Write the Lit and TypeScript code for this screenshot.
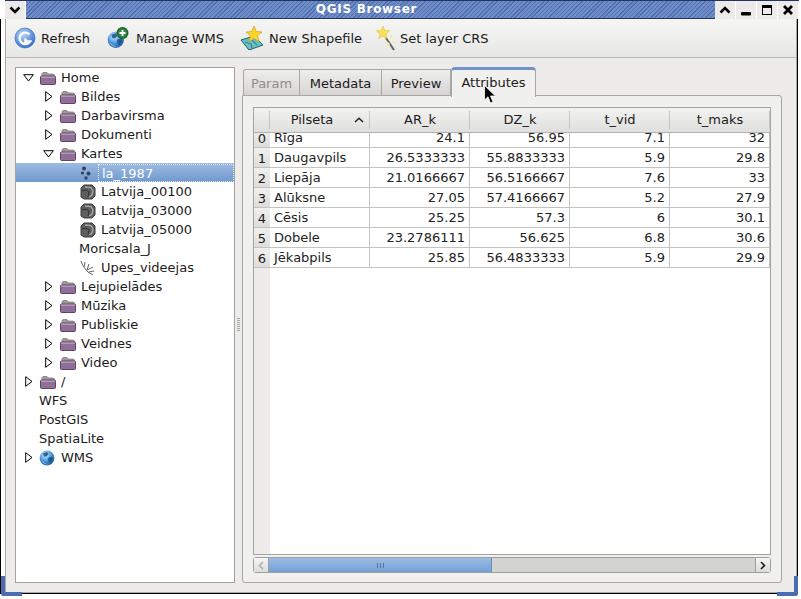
import { LitElement, html, css, svg } from 'lit';
import { customElement } from 'lit/decorators.js';

type Icon = 'folder' | 'points' | 'raster' | 'line' | 'globe' | null;
interface Node {
  label: string;
  depth: number;
  arrow?: 'open' | 'closed';
  icon?: Icon;
  selected?: boolean;
}

const TREE: Node[] = [
  { label: 'Home', depth: 0, arrow: 'open', icon: 'folder' },
  { label: 'Bildes', depth: 1, arrow: 'closed', icon: 'folder' },
  { label: 'Darbavirsma', depth: 1, arrow: 'closed', icon: 'folder' },
  { label: 'Dokumenti', depth: 1, arrow: 'closed', icon: 'folder' },
  { label: 'Kartes', depth: 1, arrow: 'open', icon: 'folder' },
  { label: 'la_1987', depth: 2, icon: 'points', selected: true },
  { label: 'Latvija_00100', depth: 2, icon: 'raster' },
  { label: 'Latvija_03000', depth: 2, icon: 'raster' },
  { label: 'Latvija_05000', depth: 2, icon: 'raster' },
  { label: 'Moricsala_J', depth: 2 },
  { label: 'Upes_videejas', depth: 2, icon: 'line' },
  { label: 'Lejupielādes', depth: 1, arrow: 'closed', icon: 'folder' },
  { label: 'Mūzika', depth: 1, arrow: 'closed', icon: 'folder' },
  { label: 'Publiskie', depth: 1, arrow: 'closed', icon: 'folder' },
  { label: 'Veidnes', depth: 1, arrow: 'closed', icon: 'folder' },
  { label: 'Video', depth: 1, arrow: 'closed', icon: 'folder' },
  { label: '/', depth: 0, arrow: 'closed', icon: 'folder' },
  { label: 'WFS', depth: 0 },
  { label: 'PostGIS', depth: 0 },
  { label: 'SpatiaLite', depth: 0 },
  { label: 'WMS', depth: 0, arrow: 'closed', icon: 'globe' },
];

const COLUMNS = ['AR_k', 'DZ_k', 't_vid', 't_maks'];
const ROWS: [string, string, string, string, string][] = [
  ['Rīga', '24.1', '56.95', '7.1', '32'],
  ['Daugavpils', '26.5333333', '55.8833333', '5.9', '29.8'],
  ['Liepāja', '21.0166667', '56.5166667', '7.6', '33'],
  ['Alūksne', '27.05', '57.4166667', '5.2', '27.9'],
  ['Cēsis', '25.25', '57.3', '6', '30.1'],
  ['Dobele', '23.2786111', '56.625', '6.8', '30.6'],
  ['Jēkabpils', '25.85', '56.4833333', '5.9', '29.9'],
];

const folder = svg`<svg width="18" height="16" viewBox="0 0 18 16">
  <path d="M3 5V3.5L4 2.5H8L9.5 4H14.5L15.5 5V7H3Z" fill="#9b9a96" stroke="#77756f" stroke-width=".7"/>
  <rect x="1.5" y="6" width="15" height="8.5" rx="1" fill="#8f6e97" stroke="#5f4468"/>
  <rect x="2" y="6.5" width="14" height="1.4" fill="#b99cbf"/>
</svg>`;

const points = svg`<svg width="16" height="16" viewBox="0 0 16 16" fill="#33445c">
  <circle cx="5" cy="3.5" r="2"/><circle cx="3.5" cy="8" r="1.6"/><circle cx="9.5" cy="8.5" r="2"/><circle cx="7" cy="13" r="1.7"/>
</svg>`;

const raster = svg`<svg width="18" height="16" viewBox="0 0 18 16">
  <path d="M2 4L5 1H13L16 4V12L13 15H5L2 13Z" fill="#5e5e5e" stroke="#3b3b3b"/>
  <path d="M6 3L12 3.5L14 7L13 11L10 13" fill="none" stroke="#a9a9a9" stroke-width="1.3"/>
  <path d="M3 7L7 6L10 8L9 13" fill="none" stroke="#2f2f2f"/>
</svg>`;

const line = svg`<svg width="18" height="16" viewBox="0 0 18 16" fill="none" stroke="#55565a" stroke-width=".9">
  <path d="M2 1C3 5 6 9 9 12L14 15M5 7L6 2M8 10L10 4M8 10L14 7M10 12L15 11"/>
</svg>`;

const globe = (s: number) => svg`<svg width=${s} height=${s} viewBox="0 0 16 16">
  <defs><radialGradient id="gl" cx=".4" cy=".3" r=".8"><stop offset="0" stop-color="#cfe9fb"/><stop offset=".55" stop-color="#3f8fd6"/><stop offset="1" stop-color="#174f94"/></radialGradient></defs>
  <circle cx="8" cy="8" r="7.4" fill="url(#gl)"/>
  <path d="M4 3.5L8 2L9.5 4L7.5 6.5L5 6.5ZM9 8L13 6.5L14.5 9L11.5 13L9.5 11.5Z" fill="#1d4f86" opacity=".85"/>
  <path d="M2 10Q6 14.5 11 14.5Q5 15 2 10Z" fill="#e6f4fd"/>
</svg>`;

const ICONS: Record<string, unknown> = { folder, points, raster, line, globe: globe(16) };

@customElement('app-root')
export class AppRoot extends LitElement {
  static styles = css`
    :host {
      display: block;
      width: 801px;
      height: 599px;
      font: 13px/19px 'DejaVu Sans', sans-serif;
      color: #1b1b1b;
      overflow: hidden;
    }
    .win {
      position: relative;
      width: 801px;
      height: 599px;
      box-sizing: border-box;
      background: #fff;
      display: flex;
      flex-direction: column;
    }
    .title {
      height: 18px;
      display: flex;
      background: #fff;
      border-top: 1px solid #23365f;
      margin: 0 2px 0 5px;
      flex: none;
    }
    .tbtn {
      width: 21px;
      flex: none;
      display: grid;
      place-items: center;
      background: #ecebe9;
      border-right: 1px solid #fff;
      box-sizing: border-box;
    }
    .stripes {
      flex: 1;
      display: flex;
      align-items: center;
      justify-content: center;
      color: #fff;
      font: bold 12px/17px 'DejaVu Sans', sans-serif;
      letter-spacing: 0.7px;
      padding-right: 8px;
      border-bottom: 1px solid #23365f;
      background: repeating-linear-gradient(135deg, #4f6fae 0 1px, #6f8dc8 1px 3px);
    }
    .frame {
      flex: 1;
      min-height: 0;
      display: flex;
      flex-direction: column;
      margin: 0 3px 5px 0;
      border-left: 1px solid #000;
      border-right: 1px solid #000;
      border-bottom: 1px solid #000;
      padding-left: 4px;
      background: #fff;
    }
    .inner {
      flex: 1;
      min-height: 0;
      display: flex;
      flex-direction: column;
      background: #edecea;
      border-left: 1px solid #aaa8a3;
      border-right: 1px solid #aaa8a3;
      border-bottom: 1px solid #aaa8a3;
    }
    .toolbar {
      height: 39px;
      flex: none;
      display: flex;
      align-items: center;
      box-sizing: border-box;
      border-bottom: 1px solid #bdbcb8;
      padding: 0 0 0 8px;
      background: linear-gradient(#f5f5f4, #e7e7e5);
    }
    .tool {
      display: flex;
      align-items: center;
    }
    .tool svg { flex: none; }
    .main {
      flex: 1;
      min-height: 0;
      display: flex;
      padding: 9px 14px 9px 9px;
    }
    .tree {
      width: 220px;
      flex: none;
      box-sizing: border-box;
      border: 1px solid #a5a39f;
      background: #fff;
    }
    .row {
      height: 19px;
      display: flex;
      align-items: center;
      white-space: nowrap;
    }
    .row.sel {
      background: linear-gradient(#9dbbe1, #7099cd);
      color: #fff;
    }
    .d0 { padding-left: 2px; }
    .d1 { padding-left: 22px; }
    .d2 { padding-left: 42px; }
    .arrow {
      width: 21px;
      height: 19px;
      flex: none;
      display: grid;
      place-items: center;
    }
    .ico {
      width: 18px;
      height: 16px;
      flex: none;
      margin-right: 4px;
      display: block;
    }
    .plain { padding-left: 0; }
    .focus {
      flex: 1;
      margin-left: -3px;
      padding-left: 3px;
      height: 18px;
      line-height: 17px;
      box-sizing: border-box;
      border: 1px dotted #dfe8f5;
    }
    .split {
      width: 7px;
      flex: none;
      display: flex;
      align-items: center;
      justify-content: center;
    }
    .grip {
      width: 3px;
      height: 14px;
      background: repeating-linear-gradient(#a9a7a2 0 1px, #edecea 1px 2px);
    }
    .tabs {
      flex: 1;
      min-width: 0;
      display: flex;
      flex-direction: column;
    }
    .tabbar {
      height: 28px;
      flex: none;
      display: flex;
      align-items: flex-end;
      padding-left: 1px;
    }
    .tab {
      box-sizing: border-box;
      height: 26px;
      padding-top: 4px;
      text-align: center;
      border: 1px solid #a9a7a3;
      border-bottom: none;
      border-left: none;
      background: linear-gradient(#eeeeec, #d6d5d3);
    }
    .tab:first-child {
      border-left: 1px solid #a9a7a3;
      border-top-left-radius: 3px;
      color: #8e8d8b;
    }
    .tab.active {
      height: 30px;
      margin-bottom: -2px;
      position: relative;
      padding-top: 3px;
      border-top: 3px solid #6f93c6;
      border-left: 1px solid #a9a7a3;
      border-radius: 4px 4px 0 0;
      background: #f0f0ee;
    }
    .pane {
      flex: 1;
      min-height: 0;
      box-sizing: border-box;
      border: 1px solid #a9a7a3;
      border-radius: 0 3px 3px 3px;
      background: #f0f0ee;
      padding: 11px 10px 9px 10px;
      display: flex;
      flex-direction: column;
    }
    .table {
      flex: 1;
      min-height: 0;
      box-sizing: border-box;
      border: 1px solid #a5a39f;
      background: linear-gradient(90deg, #edecea 16px, #fff 16px);
      overflow: hidden;
    }
    .grid {
      display: grid;
      grid-template-columns: 16px repeat(5, 100px) 6px;
      grid-auto-rows: 20px;
    }
    .grid > div {
      box-sizing: border-box;
      white-space: nowrap;
    }
    .h {
      height: 24px;
      background: linear-gradient(#f2f2f1, #dfdfdd);
      border-bottom: 1px solid #b4b3b0;
      text-align: center;
      line-height: 24px;
      position: relative;
    }
    .h::after {
      content: '';
      position: absolute;
      right: 0;
      top: 3px;
      bottom: 3px;
      width: 1px;
      background: #c6c5c2;
    }
    .h svg { position: absolute; right: 6px; top: 9px; }
    .headrow { grid-column: 1 / -1; display: grid; grid-template-columns: subgrid; height: 24px; }
    .n {
      background: linear-gradient(#f0f0ef, #dedddb);
      text-align: center;
      line-height: 21px;
      border-bottom: 1px solid #c4c3c0;
    }
    .c {
      padding: 0 4px;
      line-height: 19px;
      border-right: 1px solid #c4c3c0;
      border-bottom: 1px solid #c4c3c0;
      background: #fff;
      text-align: right;
      color: #222;
    }
    .c.name { text-align: left; }
    .c.end { padding: 0; border-right: none; }
    .sb {
      height: 16px;
      margin-top: 2px;
      flex: none;
      display: flex;
      box-sizing: border-box;
      border: 1px solid #a09e9a;
      border-radius: 3px;
      background: #d3d3d1;
    }
    .sb-btn {
      width: 14px;
      flex: none;
      display: grid;
      place-items: center;
      background: linear-gradient(#f6f6f5, #dcdcda);
    }
    .sb-btn.l { border-right: 1px solid #a09e9a; }
    .sb-btn.r { border-left: 1px solid #a09e9a; margin-left: auto; }
    .thumb {
      width: 223px;
      flex: none;
      display: grid;
      place-items: center;
      box-sizing: border-box;
      border-right: 1px solid #6d8fbf;
      background: linear-gradient(#9dbbe3, #74a0d6);
    }
    .dots {
      width: 7px;
      height: 5px;
      background: repeating-linear-gradient(90deg, #55749f 0 1px, transparent 1px 3px);
    }
    .grip-bl, .grip-br {
      position: absolute;
      bottom: 3px;
      width: 21px;
      height: 20px;
      box-sizing: border-box;
    }
    .grip-bl {
      left: 1px;
      border-left: 4px solid #4a6cb0;
      border-bottom: 4px solid #4a6cb0;
      border-bottom-left-radius: 3px;
    }
    .grip-br {
      right: 3px;
      border-right: 4px solid #4a6cb0;
      border-bottom: 4px solid #4a6cb0;
      border-bottom-right-radius: 3px;
    }
    .cursor { position: absolute; left: 484px; top: 85px; }
  `;

  private tool(icon: unknown, label: string, width: number, gap: number) {
    return html`<div class="tool" style="width:${width}px">${icon}<span style="margin-left:${gap}px">${label}</span></div>`;
  }

  private treeRow(n: Node) {
    const icon = n.icon ? ICONS[n.icon] : null;
    const arrow =
      n.arrow === 'open'
        ? html`<svg width="11" height="8" viewBox="0 0 11 8"><path d="M.7.7H10.3L5.5 7Z" fill="#fff" stroke="#000"/></svg>`
        : n.arrow === 'closed'
          ? html`<svg width="8" height="11" viewBox="0 0 8 11"><path d="M.7.7V10.3L7 5.5Z" fill="#fff" stroke="#000"/></svg>`
          : null;
    return html`<div class="row d${n.depth} ${n.selected ? 'sel' : ''}">
      <span class="arrow">${arrow}</span>
      ${icon ? html`<span class="ico">${icon}</span>` : null}
      ${n.selected ? html`<span class="focus">${n.label}</span>` : html`<span>${n.label}</span>`}
    </div>`;
  }

  render() {
    const refresh = html`<svg width="22" height="22" viewBox="0 0 22 22">
      <defs><radialGradient id="rf" cx=".4" cy=".3" r=".8"><stop offset="0" stop-color="#bcd6f7"/><stop offset=".7" stop-color="#4f86dc"/><stop offset="1" stop-color="#2a5eb6"/></radialGradient></defs>
      <circle cx="11" cy="11" r="10" fill="url(#rf)" stroke="#3f70c2" stroke-width=".7"/>
      <path d="M15.5 7.5A5.7 5.7 0 1 0 16 14.5H11.5V11.5" fill="none" stroke="#fff" stroke-width="2.4"/>
    </svg>`;
    const manage = html`<svg width="24" height="24" viewBox="0 0 24 24">
      <g transform="translate(0 5) scale(1.1)">${globe(16)}</g>
      <circle cx="15.5" cy="7" r="6" fill="#1f5f2f"/>
      <circle cx="15.5" cy="7" r="4.6" fill="#2f8a45"/>
      <path d="M15.5 4V10M12.5 7H18.5" stroke="#fff" stroke-width="1.8"/>
    </svg>`;
    const shape = html`<svg width="24" height="24" viewBox="0 0 24 24">
      <path d="M1 14L14 10L23 19L9 24Z" fill="#6ec3b4" stroke="#17606b"/>
      <path d="M5 16L11 18L12 22M12 14L17 19" fill="none" stroke="#3b78c6" stroke-width="1.2"/>
      <path d="M14 0L16.2 5.5L22 6L17.5 9.8L19 15.5L14 12.5L9 15.5L10.5 9.8L6 6L11.8 5.5Z" fill="#fbd52a" stroke="#d99a12" stroke-width=".7"/>
    </svg>`;
    const wand = html`<svg width="22" height="26" viewBox="0 0 22 26">
      <path d="M11 13L19 25" stroke="#6a6a66" stroke-width="2.2"/>
      <path d="M8 1L9.8 5.5L14.5 5.8L11 9L12.2 13.5L8 11L4 13.5L5 9L1.5 5.8L6.2 5.5Z" fill="#f7e15a" stroke="#e0bd3a" stroke-width=".6"/>
      <circle cx="16" cy="11" r="1.5" fill="#f5e9a6"/><circle cx="13" cy="19" r="1.7" fill="#f5e9a6"/><circle cx="19" cy="17" r="1.3" fill="#f5e9a6"/>
    </svg>`;
    return html`<div class="win">
      <div class="title">
        <div class="tbtn"><svg width="12" height="8" viewBox="0 0 12 8"><path d="M1.5 1.5L6 6L10.5 1.5" fill="none" stroke="#000" stroke-width="2.6"/></svg></div>
        <div class="stripes">QGIS Browser</div>
        <div class="tbtn"><svg width="12" height="8" viewBox="0 0 12 8"><path d="M1.5 6.5L6 2L10.5 6.5" fill="none" stroke="#000" stroke-width="2.6"/></svg></div>
        <div class="tbtn"><svg width="10" height="12" viewBox="0 0 10 12"><rect y="8" width="10" height="3.4" rx="1"/></svg></div>
        <div class="tbtn"><svg width="10" height="10" viewBox="0 0 10 10"><rect x=".5" y=".5" width="9" height="9" fill="none" stroke="#000"/><rect width="10" height="3"/></svg></div>
        <div class="tbtn"><svg width="10" height="10" viewBox="0 0 10 10"><path d="M1 1L9 9M9 1L1 9" stroke="#000" stroke-width="2.8"/></svg></div>
      </div>
      <div class="frame">
        <div class="inner">
          <div class="toolbar">
            ${this.tool(refresh, 'Refresh', 93, 5)}
            ${this.tool(manage, 'Manage WMS', 133, 5)}
            ${this.tool(shape, 'New Shapefile', 135, 5)}
            ${this.tool(wand, 'Set layer CRS', 140, 3)}
          </div>
          <div class="main">
            <div class="tree">${TREE.map((n) => this.treeRow(n))}</div>
            <div class="split"><div class="grip"></div></div>
            <div class="tabs">
              <div class="tabbar">
                <div class="tab" style="width:57px">Param</div>
                <div class="tab" style="width:82px">Metadata</div>
                <div class="tab" style="width:69px">Preview</div>
                <div class="tab active" style="width:85px">Attributes</div>
              </div>
              <div class="pane">
                <div class="table">
                  <div class="grid">
                    <div class="headrow">
                      <div class="h"></div>
                      <div class="h" style="padding-right:16px">Pilseta<svg width="10" height="6" viewBox="0 0 10 6"><path d="M1 5L5 1.2L9 5" fill="none" stroke="#222" stroke-width="1.5"/></svg></div>
                      ${COLUMNS.map((c) => html`<div class="h">${c}</div>`)}
                      <div class="h"></div>
                    </div>
                    ${ROWS.map(
                      (r, i) => html`<div class="n">${i}</div>
                        <div class="c name">${r[0]}</div>
                        ${r.slice(1).map((v) => html`<div class="c">${v}</div>`)}
                        <div class="c end"></div>`,
                    )}
                  </div>
                </div>
                <div class="sb">
                  <div class="sb-btn l"><svg width="6" height="9" viewBox="0 0 6 9"><path d="M5 1L1.5 4.5L5 8" fill="none" stroke="#a5a5a3" stroke-width="1.3"/></svg></div>
                  <div class="thumb"><div class="dots"></div></div>
                  <div class="sb-btn r"><svg width="6" height="9" viewBox="0 0 6 9"><path d="M1 1L4.5 4.5L1 8" fill="none" stroke="#111" stroke-width="1.5"/></svg></div>
                </div>
              </div>
            </div>
          </div>
        </div>
      </div>
      <div class="grip-bl"></div>
      <div class="grip-br"></div>
      <svg class="cursor" width="14" height="20" viewBox="0 0 14 20"><path d="M.5.5V15L4 11.8L6.5 18L9 17L6.5 11H11.5Z" fill="#000" stroke="#fff" stroke-width=".8"/></svg>
    </div>`;
  }
}
